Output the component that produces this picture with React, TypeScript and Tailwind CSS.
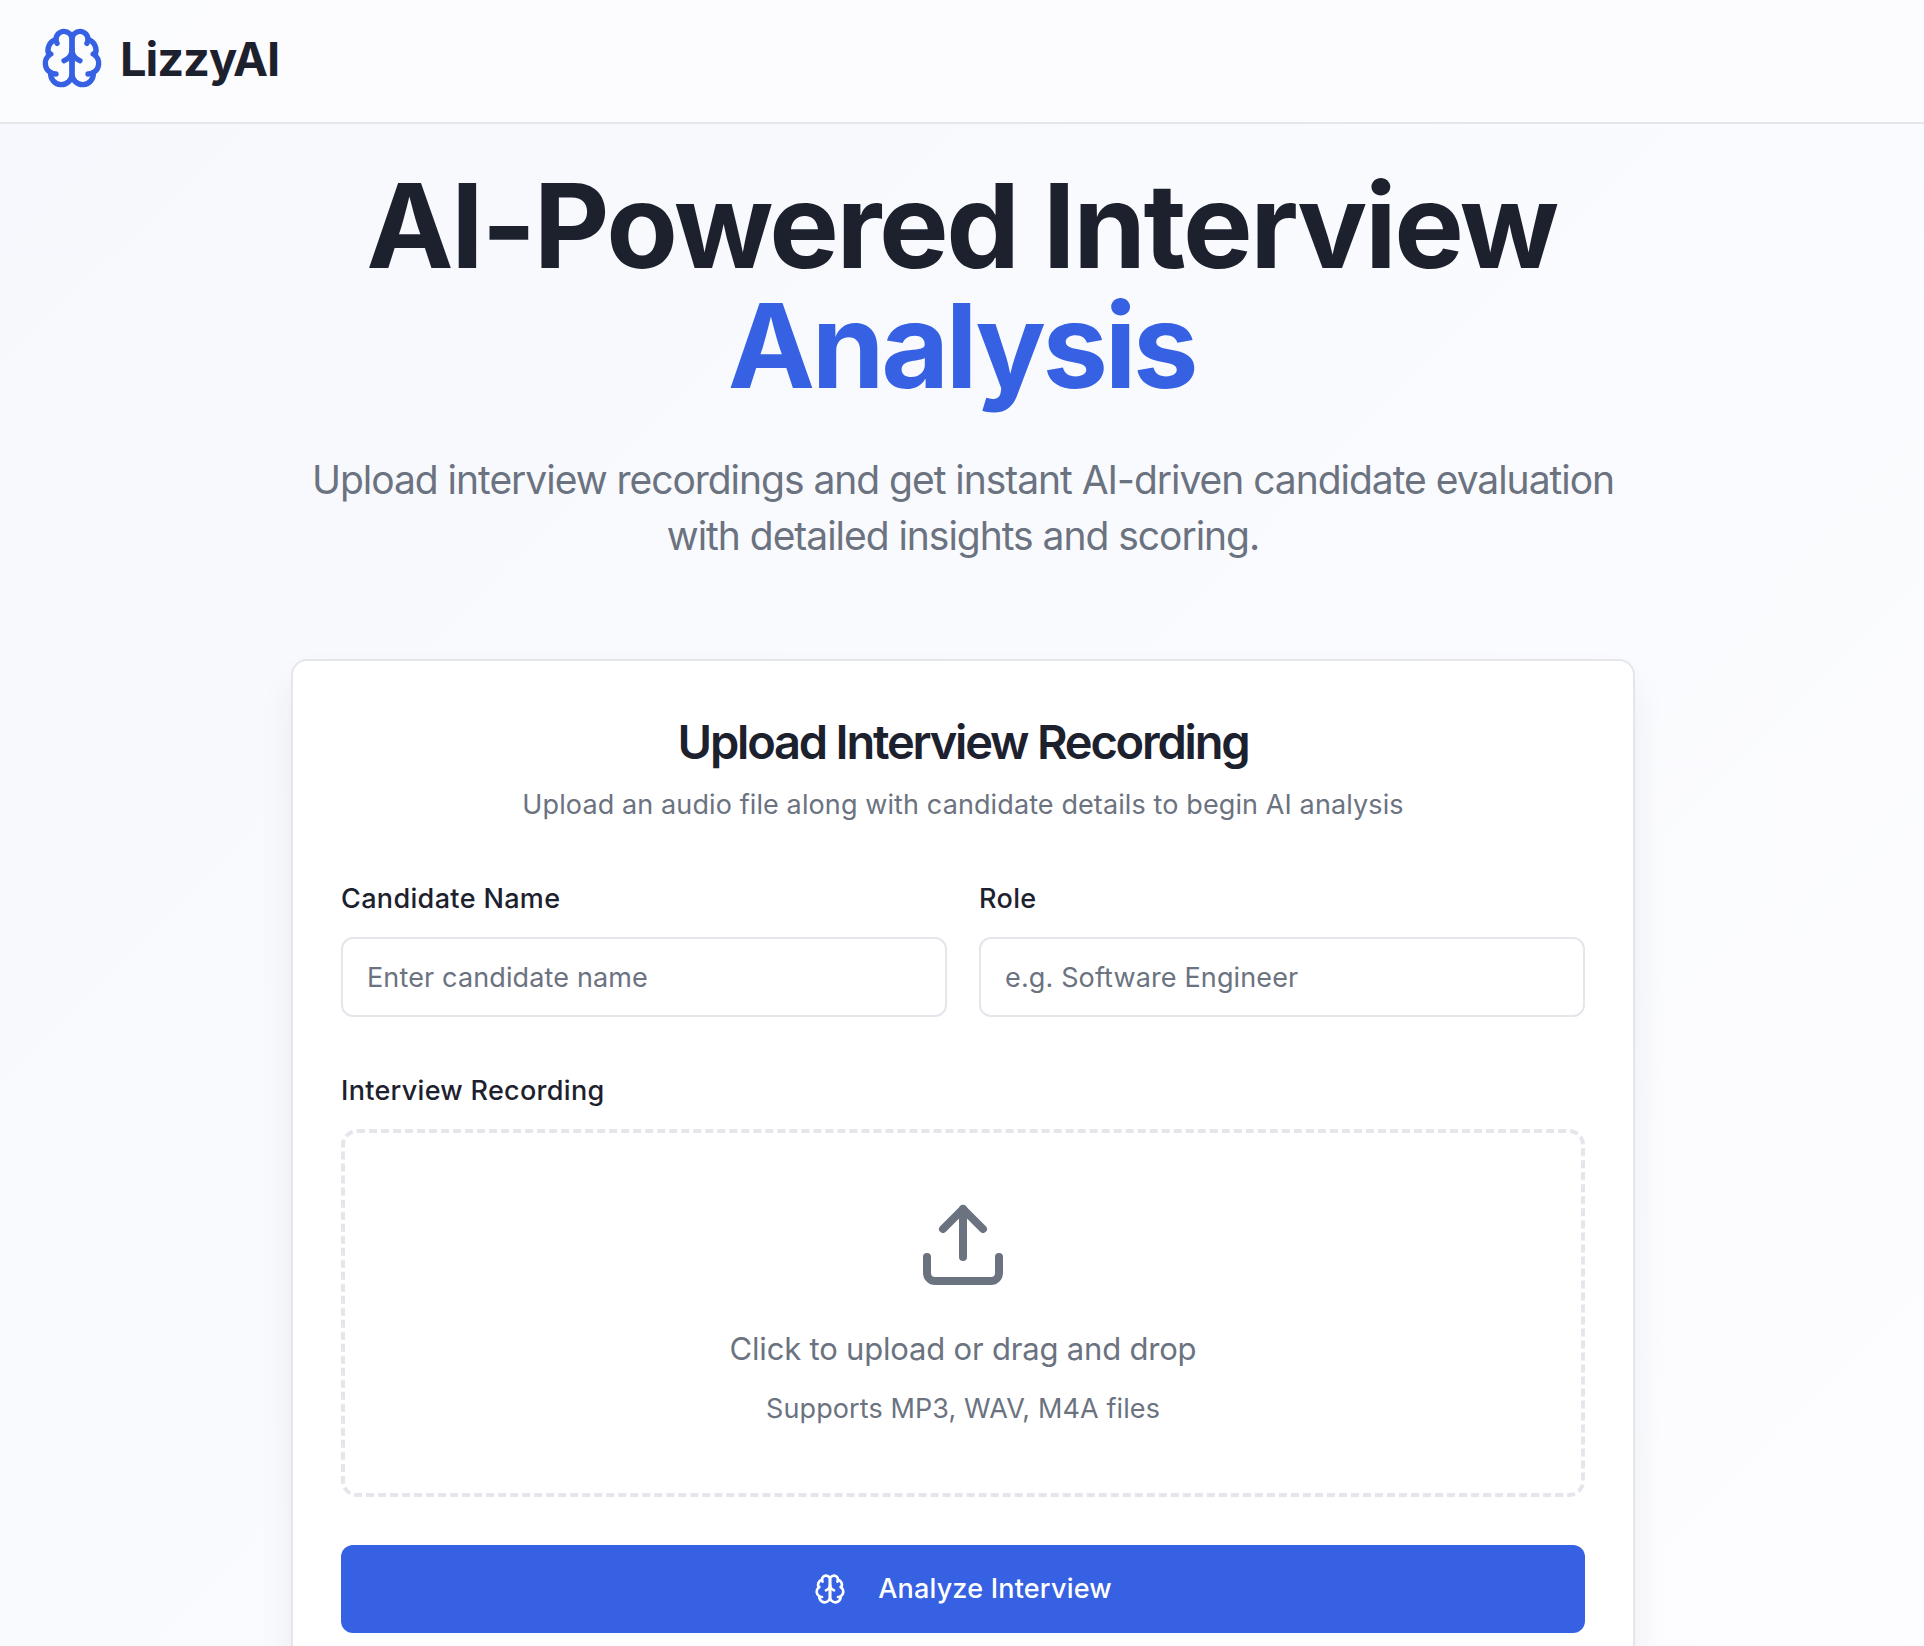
import React from "react";

function Brain({ className }: { className: string }) {
  return (
    <svg
      viewBox="0 0 24 24"
      fill="none"
      stroke="currentColor"
      strokeWidth="2"
      strokeLinecap="round"
      strokeLinejoin="round"
      className={className}
    >
      <path d="M12 5a3 3 0 1 0-5.997.125 4 4 0 0 0-2.526 5.77 4 4 0 0 0 .556 6.588A4 4 0 1 0 12 18Z" />
      <path d="M12 5a3 3 0 1 1 5.997.125 4 4 0 0 1 2.526 5.77 4 4 0 0 1-.556 6.588A4 4 0 1 1 12 18Z" />
      <path d="M15 13a4.5 4.5 0 0 1-3-4 4.5 4.5 0 0 1-3 4" />
      <path d="M17.599 6.5a3 3 0 0 0 .399-1.375" />
      <path d="M6.003 5.125A3 3 0 0 0 6.401 6.5" />
      <path d="M3.477 10.896a4 4 0 0 1 .585-.396" />
      <path d="M19.938 10.5a4 4 0 0 1 .585.396" />
      <path d="M6 18a4 4 0 0 1-1.967-.516" />
      <path d="M19.967 17.484A4 4 0 0 1 18 18" />
    </svg>
  );
}

function UploadIcon({ className }: { className: string }) {
  return (
    <svg
      viewBox="0 0 24 24"
      fill="none"
      stroke="currentColor"
      strokeWidth="2"
      strokeLinecap="round"
      strokeLinejoin="round"
      className={className}
    >
      <path d="M21 15v4a2 2 0 0 1-2 2H5a2 2 0 0 1-2-2v-4" />
      <polyline points="17 8 12 3 7 8" />
      <line x1="12" x2="12" y1="3" y2="15" />
    </svg>
  );
}

function Field({ id, label, placeholder }: { id: string; label: string; placeholder: string }) {
  return (
    <div className="flex flex-col gap-6">
      <label htmlFor={id} className="text-[27px] leading-7 font-medium tracking-[0.013em]">
        {label}
      </label>
      <input
        id={id}
        placeholder={placeholder}
        className="h-20 w-full rounded-xl border-2 border-[#e5e6eb] bg-white px-6 pt-px text-[27px] tracking-[0.005em] outline-none placeholder:text-[#6b7280]"
      />
    </div>
  );
}

export default function App() {
  return (
    <div className="h-[1646px] overflow-hidden bg-linear-135 from-[#f6f8fd] to-[#fdfdff] font-['Inter',sans-serif] text-[#1d212e] antialiased">
      <header className="h-[124px] border-b-2 border-[#e5e6eb] bg-[#fdfdfe]/80 px-10 pt-[26px]">
        <div className="flex items-start gap-4">
          <Brain className="size-16 text-[#3761e3]" />
          <span className="pt-px text-[47px] leading-[64px] font-bold tracking-[-0.0225em]">LizzyAI</span>
        </div>
      </header>

      <main className="flex flex-col items-center pt-[42px] pl-0.5">
        <h1 className="mr-[3px] text-center text-[117px] leading-[120px] font-bold tracking-[-0.0208em]">
          AI-Powered Interview
          <span className="block tracking-[-0.0285em] text-[#3761e3]">Analysis</span>
        </h1>
        <p className="mt-[46px] w-[1344px] text-center text-[39px] leading-[56px] tracking-[-0.0265em] text-[#6b7280]">
          Upload interview recordings and get instant AI-driven candidate evaluation with detailed insights and scoring.
        </p>

        <section className="mt-[95px] w-[1344px] rounded-2xl border-2 border-[#e5e6eb] bg-white px-12 pt-[57px] pb-12 shadow-[0_20px_40px_-6px_rgba(30,40,70,0.09),0_8px_12px_-8px_rgba(30,40,70,0.09)]">
          <h2 className="text-center text-[47px] leading-[48px] font-semibold tracking-[-0.0468em]">
            Upload Interview Recording
          </h2>
          <p className="mt-[19px] text-center text-[27px] leading-10 tracking-[0.004em] text-[#6b7280]">
            Upload an audio file along with candidate details to begin AI analysis
          </p>

          <div className="mt-15 grid grid-cols-2 gap-8">
            <Field id="name" label="Candidate Name" placeholder="Enter candidate name" />
            <Field id="role" label="Role" placeholder="e.g. Software Engineer" />
          </div>

          <div className="mt-15 flex flex-col gap-6">
            <span className="text-[27px] leading-7 font-medium tracking-[0.011em]">Interview Recording</span>
            <div className="flex h-[368px] flex-col items-center rounded-2xl border-4 border-dashed border-[#e5e6eb] pt-16 text-[#6b7280]">
              <UploadIcon className="size-24" />
              <p className="mt-8 text-[31px] leading-[48px] tracking-[-0.0062em]">
                Click to upload or drag and drop
              </p>
              <p className="mt-4 text-[27px] leading-10 tracking-[0.004em]">Supports MP3, WAV, M4A files</p>
            </div>
          </div>

          <button className="mt-12 flex h-22 w-full items-center justify-center gap-8 rounded-xl bg-[#3761e3] text-white">
            <Brain className="size-8" />
            <span className="text-[27px] leading-10 font-medium tracking-[0.0074em]">Analyze Interview</span>
          </button>
        </section>
      </main>
    </div>
  );
}
